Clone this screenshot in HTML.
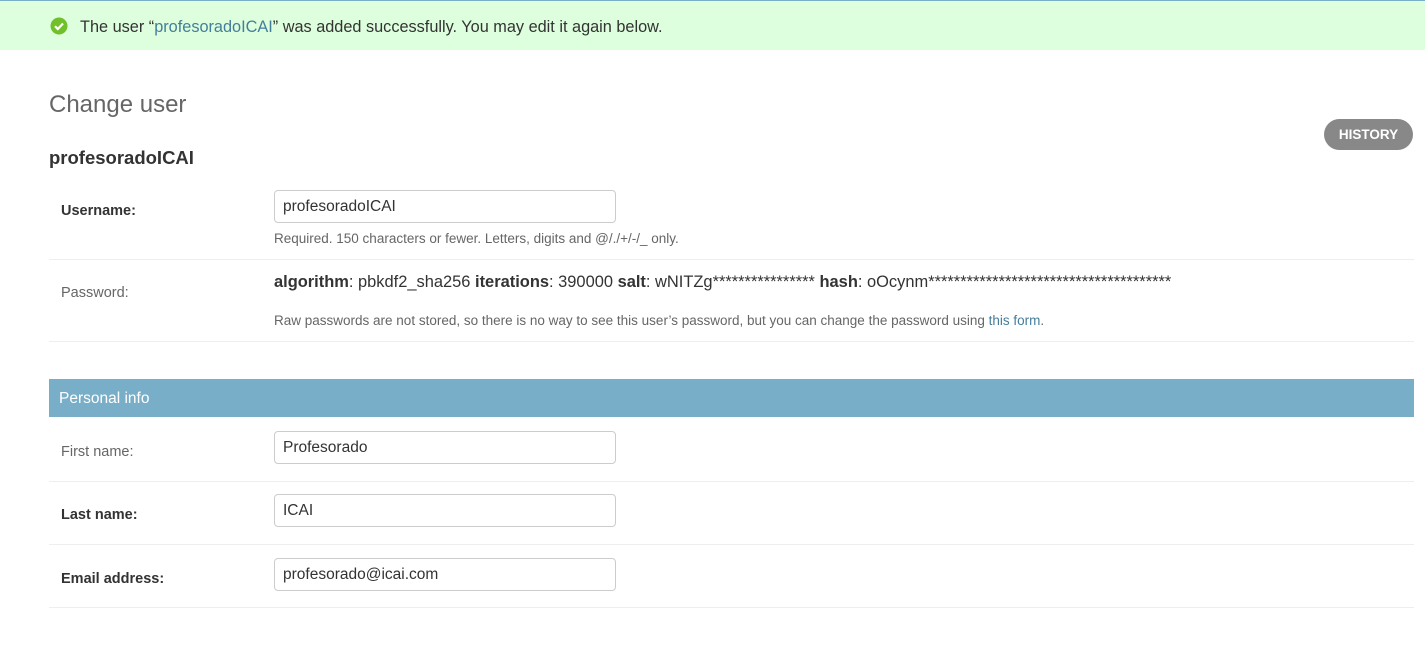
<!DOCTYPE html>
<html><head><meta charset="utf-8"><style>
body{margin:0;width:1425px;height:646px;background:#fff;font-family:"Liberation Sans",sans-serif;color:#333;position:relative;overflow:hidden}
.a{position:absolute;white-space:nowrap}
.msg{position:absolute;left:0;top:0;width:1425px;height:50px;background:#dfd;border-top:1px solid #79aec8;box-sizing:border-box}
.inp{position:absolute;left:274px;width:342px;height:33px;border:1px solid #ccc;border-radius:4px;box-sizing:border-box;font-size:15.5px;padding:7px 8px;color:#333}
.line{position:absolute;left:49px;width:1365px;height:1px;background:#eee}
.lbl{position:absolute;left:61px;font-size:14.5px}
.help{position:absolute;left:274px;font-size:13.5px;color:#666}
a{color:#447e9b;text-decoration:none}
</style></head><body>
<div class="msg">
<svg class="a" style="left:50px;top:16px" width="18" height="18" viewBox="0 0 18 18"><circle cx="9" cy="9" r="8.5" fill="#70bf2b"/><path d="M5 9.2l2.8 2.8L13 6.5" stroke="#fff" stroke-width="2.2" fill="none"/></svg>
<div class="a" style="left:80px;top:17px;font-size:16.3px">The user “<a>profesoradoICAI</a>” was added successfully. You may edit it again below.</div>
</div>
<div class="a" style="left:49px;top:91px;font-size:24px;font-weight:300;color:#666">Change user</div>
<div class="a" style="left:1324px;top:119px;width:89px;height:31px;border-radius:16px;background:#888;color:#fff;font-size:13.5px;font-weight:bold;text-align:center;line-height:31px">HISTORY</div>
<div class="a" style="left:49px;top:147px;font-size:18.5px;font-weight:bold">profesoradoICAI</div>

<div class="lbl" style="top:203px;font-weight:bold">Username:</div>
<div class="inp" style="top:190px">profesoradoICAI</div>
<div class="help" style="top:231px">Required. 150 characters or fewer. Letters, digits and @/./+/-/_ only.</div>
<div class="line" style="top:259px"></div>

<div class="lbl" style="top:285px;color:#666">Password:</div>
<div class="a" style="left:274px;top:273px;font-size:16.45px"><b>algorithm</b>: pbkdf2_sha256 <b>iterations</b>: 390000 <b>salt</b>: wNITZg**************** <b>hash</b>: oOcynm**************************************</div>
<div class="help" style="top:313px">Raw passwords are not stored, so there is no way to see this user’s password, but you can change the password using <a>this form</a>.</div>
<div class="line" style="top:341px"></div>

<div class="a" style="left:49px;top:379px;width:1365px;height:38px;background:#79aec8;color:#fff;font-size:15.5px;line-height:39px;padding-left:10px;box-sizing:border-box">Personal info</div>

<div class="lbl" style="top:444px;color:#666">First name:</div>
<div class="inp" style="top:431px">Profesorado</div>
<div class="line" style="top:481px"></div>
<div class="lbl" style="top:507px;font-weight:bold">Last name:</div>
<div class="inp" style="top:494px">ICAI</div>
<div class="line" style="top:544px"></div>
<div class="lbl" style="top:571px;font-weight:bold">Email address:</div>
<div class="inp" style="top:558px">profesorado@icai.com</div>
<div class="line" style="top:607px"></div>
</body></html>
